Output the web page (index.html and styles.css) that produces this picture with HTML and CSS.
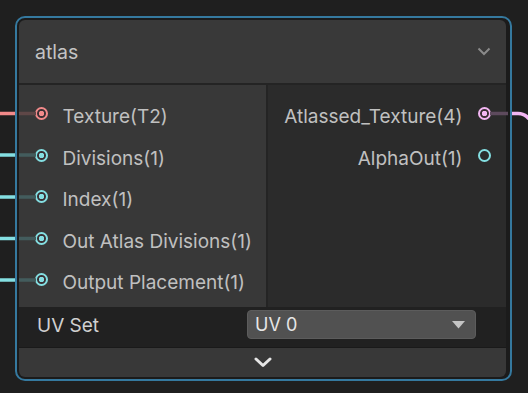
FILE: index.html
```html
<!DOCTYPE html>
<html lang="en">
<head>
    <meta charset="UTF-8">
    <meta name="viewport" content="width=device-width, initial-scale=1.0">
    <title>atlas node</title>
    <link rel="stylesheet" href="styles.css">
</head>
<body>
    <div class="selection">
        <div class="node">
            <div class="header">
                <span class="title">atlas</span>
                <svg class="collapse" width="14" height="9" viewBox="0 0 14 9"><path d="M1.5 1.5 L7 7 L12.5 1.5" fill="none" stroke="#8a8a8a" stroke-width="2"/></svg>
            </div>

            <div class="ports">
                <div class="inputs">
                    <div class="port"><span class="dot pink on"></span><span class="label">Texture(T2)</span></div>
                    <div class="port"><span class="dot cyan on"></span><span class="label">Divisions(1)</span></div>
                    <div class="port"><span class="dot cyan on"></span><span class="label">Index(1)</span></div>
                    <div class="port"><span class="dot cyan on"></span><span class="label">Out Atlas Divisions(1)</span></div>
                    <div class="port"><span class="dot cyan on"></span><span class="label">Output Placement(1)</span></div>
                </div>
                <div class="outputs">
                    <div class="port out"><span class="label">Atlassed_Texture(4)</span><span class="dot lilac on"></span></div>
                    <div class="port out"><span class="label">AlphaOut(1)</span><span class="dot cyan"></span></div>
                </div>
            </div>

            <div class="setting">
                <span class="setting-label">UV Set</span>
                <div class="select">
                    <span>UV 0</span>
                    <svg width="13" height="8" viewBox="0 0 13 8"><path d="M0 0 H13 L6.5 7.5 Z" fill="#c4c4c4"/></svg>
                </div>
            </div>

            <div class="footer">
                <svg width="18" height="11" viewBox="0 0 18 11"><path d="M2 2 L9 8.5 L16 2" fill="none" stroke="#e6e6e6" stroke-width="3" stroke-linecap="round" stroke-linejoin="round"/></svg>
            </div>
        </div>
    </div>

    <!-- edges that run into the node -->
    <svg class="wires" width="528" height="393" viewBox="0 0 528 393">
        <g stroke-width="3.5" fill="none">
            <path d="M0 113.5 H15" stroke="#f28a8a"/>
            <path d="M19 113.5 H36" stroke="#5e4747"/>
            <path d="M0 155 H15" stroke="#84dfe2"/>
            <path d="M19 155 H36" stroke="#435c5d"/>
            <path d="M0 197 H15" stroke="#84dfe2"/>
            <path d="M19 197 H36" stroke="#435c5d"/>
            <path d="M0 238.5 H15" stroke="#84dfe2"/>
            <path d="M19 238.5 H36" stroke="#435c5d"/>
            <path d="M0 280 H15" stroke="#84dfe2"/>
            <path d="M19 280 H36" stroke="#435c5d"/>
            <path d="M490 113.5 H508" stroke="#5d4a5d"/>
            <path d="M512 113.5 H518 C523 113.5 526 115 529 119" stroke="#f3b6f3"/>
        </g>
    </svg>
</body>
</html>
```

FILE: styles.css
```css
body {
    margin: 0;
    padding: 16px 0 0 15px;
    background-color: #1f1f1f;
    font-family: Inter, "Noto Sans", sans-serif;
    color: #c0c0c0;
}
.selection {
    box-sizing: border-box;
    width: 497px;
    height: 365px;
    padding: 2px 4px 2px 2px;
    border: 2px solid #35799f;
    border-radius: 10px;
    background-color: #1b1b1b;
}
.node {
    display: flex;
    flex-direction: column;
    height: 100%;
    border-radius: 6px;
}
.header {
    display: flex;
    align-items: center;
    justify-content: space-between;
    height: 63px;
    padding: 0 15px 0 16px;
    background-color: #393939;
    border-bottom: 2px solid #242424;
    border-radius: 6px 6px 0 0;
}
.title {
    font-size: 19.5px;
    color: #c4c4c4;
}
.ports {
    display: flex;
    height: 222px;
}
.inputs {
    width: 247px;
    padding-top: 8px;
    background-color: #383838;
    border-right: 2px solid #242424;
}
.outputs {
    flex: 1;
    padding-top: 8px;
    background-color: #2b2b2b;
}
.port {
    display: flex;
    align-items: center;
    gap: 15px;
    height: 41.5px;
    padding-left: 15.5px;
    font-size: 19px;
}
.port.out {
    justify-content: flex-end;
    padding: 0 15.5px 0 0;
}
.label {
    padding-top: 6px;
}
.dot {
    box-sizing: border-box;
    width: 13px;
    height: 13px;
    border: 2px solid;
    border-radius: 50%;
}
.dot.pink { color: #f28a8a; }
.dot.cyan { color: #84dfe2; }
.dot.lilac { color: #f3b6f3; }
.dot.on {
    background: radial-gradient(circle, currentColor 0 2.5px, #3a2f33 3px);
}
.setting {
    display: flex;
    align-items: center;
    height: 40px;
    padding-left: 18px;
    background-color: #212121;
    border-bottom: 1px solid #1a1a1a;
}
.setting-label {
    width: 210px;
    font-size: 19px;
    color: #d0d0d0;
    padding-bottom: 4px;
}
.select {
    box-sizing: border-box;
    display: flex;
    align-items: center;
    justify-content: space-between;
    width: 229px;
    height: 29px;
    margin-top: -5px;
    padding: 0 10px 0 7px;
    background-color: #515151;
    border: 1px solid #5c5c5c;
    border-radius: 4px;
    font-size: 18px;
    color: #e6e6e6;
}
.footer {
    flex: 1;
    display: flex;
    align-items: center;
    justify-content: center;
    background-color: #383838;
    border-radius: 0 0 6px 6px;
}
.wires {
    position: absolute;
    top: 0;
    left: 0;
    pointer-events: none;
}
```
